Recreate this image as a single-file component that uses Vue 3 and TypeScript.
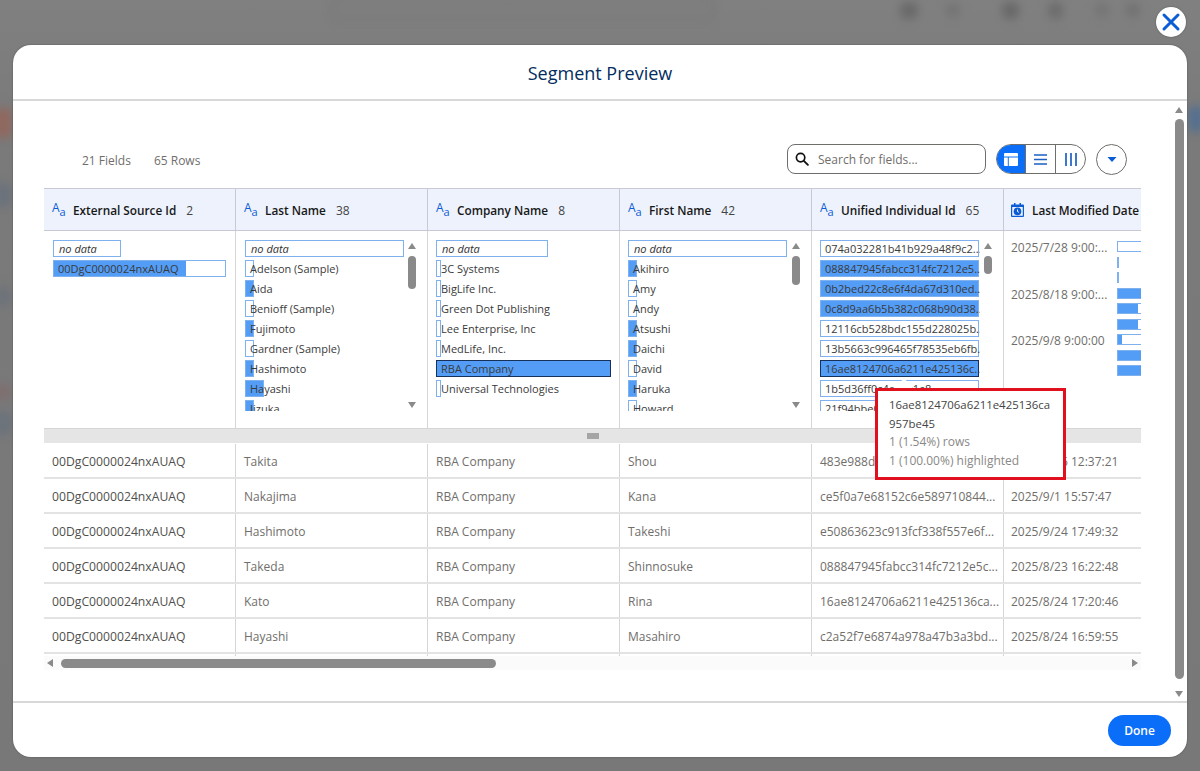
<script setup lang="ts">
interface Bar { w: number; fill: number; sel?: boolean }
interface Item extends Bar { label: string }
interface Col { name: string; count: string; items: Item[]; thumb?: number; noData: number }

const it = (label: string, w: number, fill: number, sel = false): Item => ({ label, w, fill, sel })

const cols: Col[] = [
  { name: 'External Source Id', count: '2', noData: 68, items: [it('00DgC0000024nxAUAQ', 173, 133)] },
  {
    name: 'Last Name', count: '38', noData: 159, thumb: 33,
    items: [
      it('Adelson (Sample)', 9, 0), it('Aida', 9, 9), it('Benioff (Sample)', 9, 0), it('Fujimoto', 9, 9),
      it('Gardner (Sample)', 9, 0), it('Hashimoto', 9, 9), it('Hayashi', 19, 19), it('Iizuka', 9, 9)
    ]
  },
  {
    name: 'Company Name', count: '8', noData: 112,
    items: [
      it('3C Systems', 5, 0), it('BigLife Inc.', 5, 0), it('Green Dot Publishing', 5, 0), it('Lee Enterprise, Inc', 5, 0),
      it('MedLife, Inc.', 5, 0), it('RBA Company', 175, 175, true), it('Universal Technologies', 5, 0)
    ]
  },
  {
    name: 'First Name', count: '42', noData: 159, thumb: 29,
    items: [
      it('Akihiro', 9, 9), it('Amy', 9, 0), it('Andy', 9, 0), it('Atsushi', 9, 9),
      it('Daichi', 9, 9), it('David', 9, 0), it('Haruka', 9, 9), it('Howard', 9, 0)
    ]
  },
  {
    name: 'Unified Individual Id', count: '65', noData: 0, thumb: 18,
    items: [
      it('074a032281b41b929a48f9c2...', 159, 0), it('088847945fabcc314fc7212e5...', 159, 159),
      it('0b2bed22c8e6f4da67d310ed...', 159, 159), it('0c8d9aa6b5b382c068b90d38...', 159, 159),
      it('12116cb528bdc155d228025b...', 159, 0), it('13b5663c996465f78535eb6fb...', 159, 0),
      it('16ae8124706a6211e425136c...', 159, 159, true), it('1b5d36ff0c4aa2c1e8...', 159, 0),
      it('21f94bbe07a3c5d6e2...', 159, 0)
    ]
  }
]

const dates = ['2025/7/28 9:00:...', '2025/8/18 9:00:...', '2025/9/8 9:00:00']
const dateBars: Bar[] = [
  { w: 60, fill: 0 }, { w: 1, fill: 1 }, { w: 1, fill: 1 }, { w: 60, fill: 60 }, { w: 60, fill: 21 },
  { w: 60, fill: 21 }, { w: 60, fill: 5 }, { w: 60, fill: 60 }, { w: 60, fill: 60 }
]

const rows: string[][] = [
  ['Takita', 'Shou', '483e988d0f2b41c7a9d6e3f1c...', '2025/8/16 12:37:21'],
  ['Nakajima', 'Kana', 'ce5f0a7e68152c6e589710844...', '2025/9/1 15:57:47'],
  ['Hashimoto', 'Takeshi', 'e50863623c913fcf338f557e6f...', '2025/9/24 17:49:32'],
  ['Takeda', 'Shinnosuke', '088847945fabcc314fc7212e5c...', '2025/8/23 16:22:48'],
  ['Kato', 'Rina', '16ae8124706a6211e425136ca...', '2025/8/24 17:20:46'],
  ['Hayashi', 'Masahiro', 'c2a52f7e6874a978a47b3a3bd...', '2025/8/24 16:59:55']
]

const barStyle = (b: Bar) => ({ width: `${b.w}px` })
const fillStyle = (b: Bar) => ({ width: `${b.fill}px` })
</script>

<template>
  <div class="page">
    <div class="backdrop">
      <i class="blob b1"></i><i class="blob b2"></i><i class="blob b3"></i><i class="blob b4"></i>
      <i class="blob b5"></i><i class="blob b9"></i><i class="blob b10"></i><i class="blob b6"></i>
      <i class="blob b7"></i><i class="blob b11"></i><i class="blob b12"></i><i class="blob b13"></i><i class="blob b8"></i>
    </div>

    <button class="close" aria-label="Close">
      <svg width="20" height="20" viewBox="0 0 20 20"><path d="M3 3l14 14M17 3L3 17" stroke="#0b5cd5" stroke-width="3" stroke-linecap="round" /></svg>
    </button>

    <section class="modal">
      <header class="head">Segment Preview</header>

      <div class="body">
        <div class="content">
          <div class="toolbar">
            <div class="stats"><span>21 Fields</span><span>65 Rows</span></div>
            <div class="search">
              <svg width="14" height="14" viewBox="0 0 15 15"><circle cx="6" cy="6" r="4.500" fill="none" stroke="#111" stroke-width="1.800" /><path d="M9.500 9.500l4.300 4.300" stroke="#111" stroke-width="2" stroke-linecap="round" /></svg>
              <span>Search for fields...</span>
            </div>
            <div class="seg">
              <div class="seg-btn on">
                <svg width="14" height="13" viewBox="0 0 14 13"><path d="M1 0h12a1 1 0 0 1 1 1v2.500H0V1a1 1 0 0 1 1-1zM0 4.500h3.800V13H1a1 1 0 0 1-1-1zM4.800 4.500H14V12a1 1 0 0 1-1 1H4.800z" fill="#fff" /></svg>
              </div>
              <div class="seg-btn">
                <svg width="13" height="11" viewBox="0 0 13 11"><path d="M0 1h13M0 5.500h13M0 10h13" stroke="#1d5fc4" stroke-width="1.600" /></svg>
              </div>
              <div class="seg-btn">
                <svg width="12" height="13" viewBox="0 0 12 13"><path d="M1 0v13M6 0v13M11 0v13" stroke="#1d5fc4" stroke-width="1.700" /></svg>
              </div>
            </div>
            <button class="drop" aria-label="More">
              <svg width="10" height="5" viewBox="0 0 10 5"><path d="M0.500 0h9L5 5z" fill="#0b5cd5" /></svg>
            </button>
          </div>

          <div class="table">
            <div class="tr-head">
              <div v-for="c in cols" :key="c.name" class="th">
                <span class="aa"><span>A</span><span class="a2">a</span></span>
                <span class="th-name">{{ c.name }}</span>
                <span class="th-count">{{ c.count }}</span>
              </div>
              <div class="th last">
                <svg class="cal" width="13" height="14" viewBox="0 0 13 14"><path d="M3 0h1.500v1.500h4V0H10v1.500h2a1 1 0 0 1 1 1V13a1 1 0 0 1-1 1H1a1 1 0 0 1-1-1V2.500a1 1 0 0 1 1-1h2zM1.200 4v8.800h10.600V4z" fill="#0b5cd5" /><circle cx="6.500" cy="8.400" r="3.800" fill="#0b5cd5" /><path d="M6.500 6.500v2l1.400 .8" stroke="#fff" stroke-width="1" fill="none" /></svg>
                <span class="th-name">Last Modified Date</span>
              </div>
            </div>

            <div class="tr-filter">
              <div v-for="c in cols" :key="c.name" class="filter">
                <div class="list" :class="{ narrow: !c.noData }">
                  <div v-if="c.noData" class="nodata" :style="{ width: `${c.noData}px` }">no data</div>
                  <div v-for="(i, idx) in c.items" :key="i.label" class="item" :class="{ first: !c.noData && idx === 0 }">
                    <div class="bar" :class="{ sel: i.sel }" :style="barStyle(i)">
                      <div class="fill" :style="fillStyle(i)"></div>
                    </div>
                    <span>{{ i.label }}</span>
                  </div>
                </div>
                <div v-if="c.thumb" class="vscroll">
                  <i class="up"></i>
                  <b :style="{ height: `${c.thumb}px` }"></b>
                  <i class="down"></i>
                </div>
                <div v-else-if="c.name === 'Company Name'" class="vspacer"></div>
              </div>
              <div class="filter date">
                <div class="date-list">
                  <div v-for="d in dates" :key="d">{{ d }}</div>
                </div>
                <div class="date-bars">
                  <div v-for="(b, n) in dateBars" :key="n" class="dbar" :style="barStyle(b)">
                    <div class="fill" :style="fillStyle(b)"></div>
                  </div>
                </div>
              </div>
            </div>

            <div class="handle"><span class="grip"></span></div>

            <div v-for="(r, n) in rows" :key="n" class="tr">
              <div class="td strong">00DgC0000024nxAUAQ</div>
              <div class="td">{{ r[0] }}</div>
              <div class="td">RBA Company</div>
              <div class="td">{{ r[1] }}</div>
              <div class="td">{{ r[2] }}</div>
              <div class="td last">{{ r[3] }}</div>
            </div>
            <div class="stub"><i></i><i></i><i></i><i></i><i></i></div>

            <div class="hscroll">
              <i class="left"></i>
              <b></b>
              <i class="right"></i>
            </div>
          </div>
        </div>

        <div class="main-scroll">
          <i class="up"></i>
          <b></b>
          <i class="down"></i>
        </div>
      </div>

      <footer class="foot"><button class="done">Done</button></footer>
    </section>

    <div class="tip">
      <div class="tip-title">16ae8124706a6211e425136ca<br />957be45</div>
      <div class="tip-line">1 (1.54%) rows</div>
      <div class="tip-line">1 (100.00%) highlighted</div>
    </div>
  </div>
</template>

<style>
html, body { margin: 0; padding: 0; background: #7a7a7a; }
</style>

<style scoped>
* { box-sizing: border-box; }
.page {
  position: relative;
  width: 1200px;
  height: 771px;
  overflow: hidden;
  background: linear-gradient(#808080, #7a7a7a 120px, #787878);
  padding: 45px 13px 14px;
  font-family: "Open Sans", "Noto Sans", sans-serif;
  font-size: 12px;
  color: #514f4d;
}
.backdrop { position: absolute; inset: 0; filter: blur(4px); }
.blob { position: absolute; display: block; border-radius: 6px; }
.b1 { left: 330px; top: -4px; width: 385px; height: 25px; background: #7e7e7e; border: 2px solid #767676; }
.b2 { left: 900px; top: 2px; width: 18px; height: 17px; background: #6a6a6a; }
.b3 { left: 946px; top: 3px; width: 14px; height: 14px; background: #747474; }
.b4 { left: 1002px; top: 2px; width: 17px; height: 17px; background: #696969; }
.b5 { left: 1048px; top: 2px; width: 15px; height: 17px; background: #6d6d6d; }
.b9 { left: 1095px; top: 3px; width: 14px; height: 14px; background: #757575; }
.b10 { left: 1126px; top: 3px; width: 14px; height: 14px; background: #727272; }
.b6 { left: -6px; top: 108px; width: 18px; height: 30px; background: #90685f; }
.b7 { left: -6px; top: 183px; width: 18px; height: 24px; background: #6c727c; }
.b11 { left: -6px; top: 287px; width: 18px; height: 20px; background: #6e737a; }
.b12 { left: -6px; top: 384px; width: 18px; height: 16px; background: #7e6f70; }
.b13 { left: -6px; top: 411px; width: 18px; height: 24px; background: #6c737c; }
.b8 { left: 1188px; top: 106px; width: 16px; height: 26px; background: #56708f; }

.close {
  position: absolute;
  left: 1156px;
  top: 7px;
  width: 30px;
  height: 30px;
  border: 0;
  padding: 0;
  border-radius: 50%;
  background: #fff;
  display: flex;
  align-items: center;
  justify-content: center;
  box-shadow: 0 0 2px rgba(0,0,0,.35);
}

.modal {
  position: relative;
  height: 712px;
  background: #fff;
  border-radius: 18px;
  display: flex;
  flex-direction: column;
  overflow: hidden;
  box-shadow: 0 0 2px rgba(0,0,0,.35);
}
.head {
  height: 56px;
  flex: none;
  display: flex;
  align-items: center;
  justify-content: center;
  padding-top: 2px;
  font-size: 18px;
  color: #032d60;
  border-bottom: 2px solid #d8d8d8;
}
.body { flex: 1; min-height: 0; display: flex; position: relative; }
.content { flex: 1; min-width: 0; padding: 43px 0 0 31px; }
.toolbar { display: flex; align-items: center; height: 30px; width: 1098px; }
.stats { flex: 1; display: flex; gap: 23px; padding-left: 38px; color: #706e6b; padding-top: 2px; }
.search {
  width: 199px;
  height: 30px;
  border: 1px solid #706e6b;
  border-radius: 8px;
  display: flex;
  align-items: center;
  gap: 9px;
  padding-left: 7px;
  color: #706e6b;
}
.seg {
  margin-left: 10px;
  width: 90px;
  height: 30px;
  border: 1px solid #706e6b;
  border-radius: 15px;
  display: flex;
  overflow: hidden;
}
.seg-btn { flex: 1; display: flex; align-items: center; justify-content: center; border-left: 1px solid #706e6b; }
.seg-btn:first-child { border-left: 0; }
.seg-btn.on { background: #0b6ef9; margin: -1px 0 -1px -1px; }
.drop {
  margin-left: 10px;
  margin-right: 15px;
  width: 31px;
  height: 31px;
  flex: none;
  border: 1px solid #706e6b;
  border-radius: 50%;
  background: #fff;
  padding: 0;
  display: flex;
  align-items: center;
  justify-content: center;
}

.table { margin-top: 14px; width: 1097px; overflow: hidden; }
.tr-head { display: flex; height: 43px; background: #edf2fc; border-top: 1px solid #c9c9d4; border-bottom: 1px solid #c9c9d4; width: 1140px; }
.th {
  width: 192px;
  flex: none;
  display: flex;
  align-items: center;
  padding: 1px 0 0 8px;
  border-right: 1px solid #c9c9d4;
  color: #181818;
  font-size: 11.800px;
  font-weight: 600;
  white-space: nowrap;
}
.th.last { border-right: 0; padding-left: 7px; }
.aa { color: #0b5cd5; font-weight: 500; width: 15px; display: inline-flex; font-size: 12px; line-height: 12px; margin-right: 6px; margin-top: -5px; }
.a2 { font-size: 11px; position: relative; top: 4px; }
.cal { margin-right: 8px; margin-top: -1px; }
.th-count { margin-left: 10px; font-weight: 400; color: #444; font-size: 12px; }

.tr-filter { display: flex; height: 197px; width: 1140px; }
.filter {
  width: 192px;
  flex: none;
  position: relative;
  border-right: 1px solid #d5d5d5;
  padding: 9px 0 0 9px;
  display: flex;
  overflow: visible;
}
.filter:nth-child(n+3) { padding-left: 8px; }
.list { height: 171px; overflow: hidden; flex: none; width: 176px; }
.list.narrow { width: 160px; }
.nodata {
  height: 17px;
  border: 1px solid #7fb1ee;
  font-style: italic;
  color: #333;
  line-height: 16px;
  padding-left: 5px;
  font-size: 11px;
}
.item { position: relative; height: 17px; margin-top: 3px; line-height: 18px; font-size: 11px; color: #3a3a3a; white-space: nowrap; }
.item.first { margin-top: 0; }
.item span { position: relative; padding-left: 5px; }
.bar { position: absolute; left: 0; top: 0; height: 17px; border: 1px solid #7fb1ee; background: #fff; overflow: hidden; }
.bar.sel { border-color: #16325c; }
.bar .fill, .dbar .fill { height: 100%; background: #539df6; margin: -1px; min-height: 17px; }
.bar.sel .fill { margin: 0; width: 100% !important; min-height: 15px; }

.vscroll { position: absolute; top: 9px; left: 172px; width: 9px; height: 171px; }
.vscroll i, .main-scroll i { position: absolute; left: 0; width: 0; height: 0; border-left: 4.500px solid transparent; border-right: 4.500px solid transparent; }
.vscroll i.up { top: 3px; border-bottom: 6px solid #8a8a8a; }
.vscroll i.down { bottom: 3px; border-top: 6px solid #8a8a8a; }
.vscroll b { position: absolute; top: 16px; left: 0; width: 8px; background: #8a8a8a; border-radius: 4px; }

.date { width: 200px; padding: 0; display: block; border-right: 0; overflow: hidden; }
.date-list { position: absolute; left: 7px; top: 8px; color: #706e6b; }
.date-list div { height: 46.500px; line-height: 18px; }
.date-bars { position: absolute; left: 113px; top: 10px; display: flex; flex-direction: column; gap: 4.500px; }
.dbar { height: 11px; border: 1px solid #7fb1ee; background: #fff; overflow: hidden; }
.dbar .fill { min-height: 11px; margin: -1px; }

.handle { height: 15px; margin-bottom: 1px; background: #e5e5e5; border-top: 1px solid #d5d5d5; display: flex; align-items: center; justify-content: center; }
.grip { width: 12px; height: 6px; background-image: radial-gradient(circle at center, #666 45%, transparent 55%); background-size: 2px 2px; }

.tr { display: flex; height: 35px; width: 1140px; border-bottom: 2px solid #e3e3e3; }
.td {
  width: 192px;
  flex: none;
  padding: 1px 0 0 8px;
  border-right: 1px solid #d5d5d5;
  color: #706e6b;
  line-height: 33px;
  white-space: nowrap;
  overflow: hidden;
}
.td.last { border-right: 0; width: 150px; padding-left: 7px; }
.td.strong { font-weight: 500; font-size: 12.200px; color: #514f4d; }
.stub { display: flex; height: 2px; width: 1140px; }
.stub i { display: block; width: 192px; border-right: 1px solid #d5d5d5; }

.hscroll { position: relative; height: 14px; background: #fbfbfb; }
.hscroll b { position: absolute; left: 17px; top: 3px; width: 435px; height: 9px; border-radius: 5px; background: #8a8a8a; }
.hscroll i { position: absolute; top: 3px; width: 0; height: 0; border-top: 4.500px solid transparent; border-bottom: 4.500px solid transparent; }
.hscroll i.left { left: 3px; border-right: 6px solid #8a8a8a; }
.hscroll i.right { right: 3px; border-left: 6px solid #8a8a8a; }

.main-scroll { position: absolute; right: 2px; top: 0; width: 10px; height: 100%; }
.main-scroll i.up { top: 6px; left: 0; border-bottom: 6px solid #8a8a8a; }
.main-scroll i.down { bottom: 4px; left: 0; border-top: 6px solid #8a8a8a; }
.main-scroll b { position: absolute; top: 18px; left: 0; width: 9px; height: 560px; border-radius: 5px; background: #8a8a8a; }

.foot { height: 56px; flex: none; border-top: 2px solid #d8d8d8; display: flex; align-items: center; justify-content: flex-end; padding-right: 16px; }
.done {
  width: 63px;
  height: 31px;
  border: 0;
  border-radius: 16px;
  background: #0b6ef9;
  color: #fff;
  font-family: inherit;
  font-size: 12px;
  font-weight: 600;
  padding: 0;
}

.tip {
  position: absolute;
  left: 875px;
  top: 388px;
  width: 191px;
  height: 92px;
  background: #fff;
  border: 3px solid #e0101f;
  padding: 5px 0 0 11px;
  color: #514f4d;
  line-height: 18.700px;
}
.tip::before {
  content: "";
  position: absolute;
  left: 17px;
  top: -13px;
  border-left: 9px solid transparent;
  border-right: 9px solid transparent;
  border-bottom: 10px solid #fff;
}
.tip-title { font-size: 11.400px; color: #444; }
.tip-line { color: #8a8886; }
</style>
